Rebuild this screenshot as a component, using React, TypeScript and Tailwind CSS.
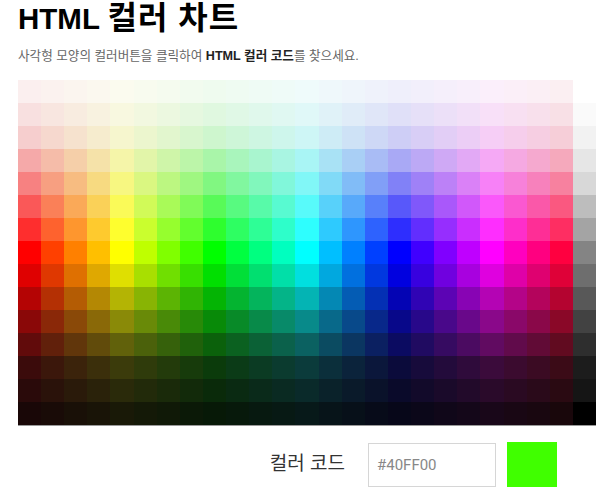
import React, { useState } from "react"

// saturation / value per row, read off the red column of the chart
const rows: [number, number][] = [
  [0.048, 0.984],
  [0.097, 0.973],
  [0.163, 0.965],
  [0.31, 0.961],
  [0.478, 0.969],
  [0.648, 0.98],
  [0.819, 0.996],
  [1, 1],
  [0.996, 0.875],
  [0.978, 0.706],
  [0.942, 0.541],
  [0.887, 0.38],
  [0.814, 0.231],
  [0.762, 0.165],
  [0.72, 0.098]
]

const grays = [
  "#FFFFFF", "#FAFAFA", "#F2F2F2", "#E6E6E6", "#D8D8D8", "#BDBDBD", "#A4A4A4",
  "#848484", "#6E6E6E", "#585858", "#424242", "#2E2E2E", "#1C1C1C", "#151515",
  "#000000"
]

const hex = (n: number) =>
  Math.round(Math.max(0, Math.min(255, n)))
    .toString(16)
    .padStart(2, "0")
    .toUpperCase()

const hsv = (h: number, s: number, v: number) => {
  const f = (n: number) => {
    const k = (n + h / 60) % 6
    return v - v * s * Math.max(0, Math.min(k, 4 - k, 1))
  }
  return `#${hex(f(5) * 255)}${hex(f(3) * 255)}${hex(f(1) * 255)}`
}

const App: React.FC = () => {
  const [code, setCode] = useState("#40FF00")

  const cells: string[] = []
  rows.forEach(([s, v], r) => {
    for (let c = 0; c < 24; c++) cells.push(hsv(c * 15, s, v))
    cells.push(grays[r])
  })

  return (
    <div
      className="w-[610px] h-[501px] bg-white pl-[18px] overflow-hidden"
      style={{ fontFamily: '"Liberation Sans", "Noto Sans CJK KR", sans-serif' }}>
      <h1 className="text-[29.5px] leading-[34px] font-bold text-black mt-[1px]">
        HTML <span className="text-[32px] tracking-[1px]">컬러 차트</span>
      </h1>
      <p className="text-[12.6px] leading-[18px] text-[#666] mt-[11px]">
        사각형 모양의 컬러버튼을 클릭하여{" "}
        <b className="text-[#222]">HTML 컬러 코드</b>를 찾으세요.
      </p>
      <div className="mt-[15px] w-[578px] h-[346px] grid grid-cols-[repeat(25,1fr)] grid-rows-[repeat(15,1fr)] border-b border-[#999]">
        {cells.map((c, i) => (
          <div
            key={i}
            className="cursor-pointer"
            style={{ backgroundColor: c }}
            onClick={() => setCode(c)}
          />
        ))}
      </div>
      <div className="flex items-center justify-end pr-[53px] mt-[16px]">
        <span className="text-[19px] text-[#333] mr-[23px]">컬러 코드</span>
        <input
          value={code}
          onChange={(e) => setCode(e.target.value)}
          className="w-[128px] h-[44px] border border-[#d6d6d6] px-[8px] text-[15px] text-[#888] outline-none"
          style={{ fontFamily: "Roboto, sans-serif" }}
        />
        <div className="w-[50px] h-[45px] ml-[11px]" style={{ backgroundColor: code }} />
      </div>
    </div>
  )
}

export default App
